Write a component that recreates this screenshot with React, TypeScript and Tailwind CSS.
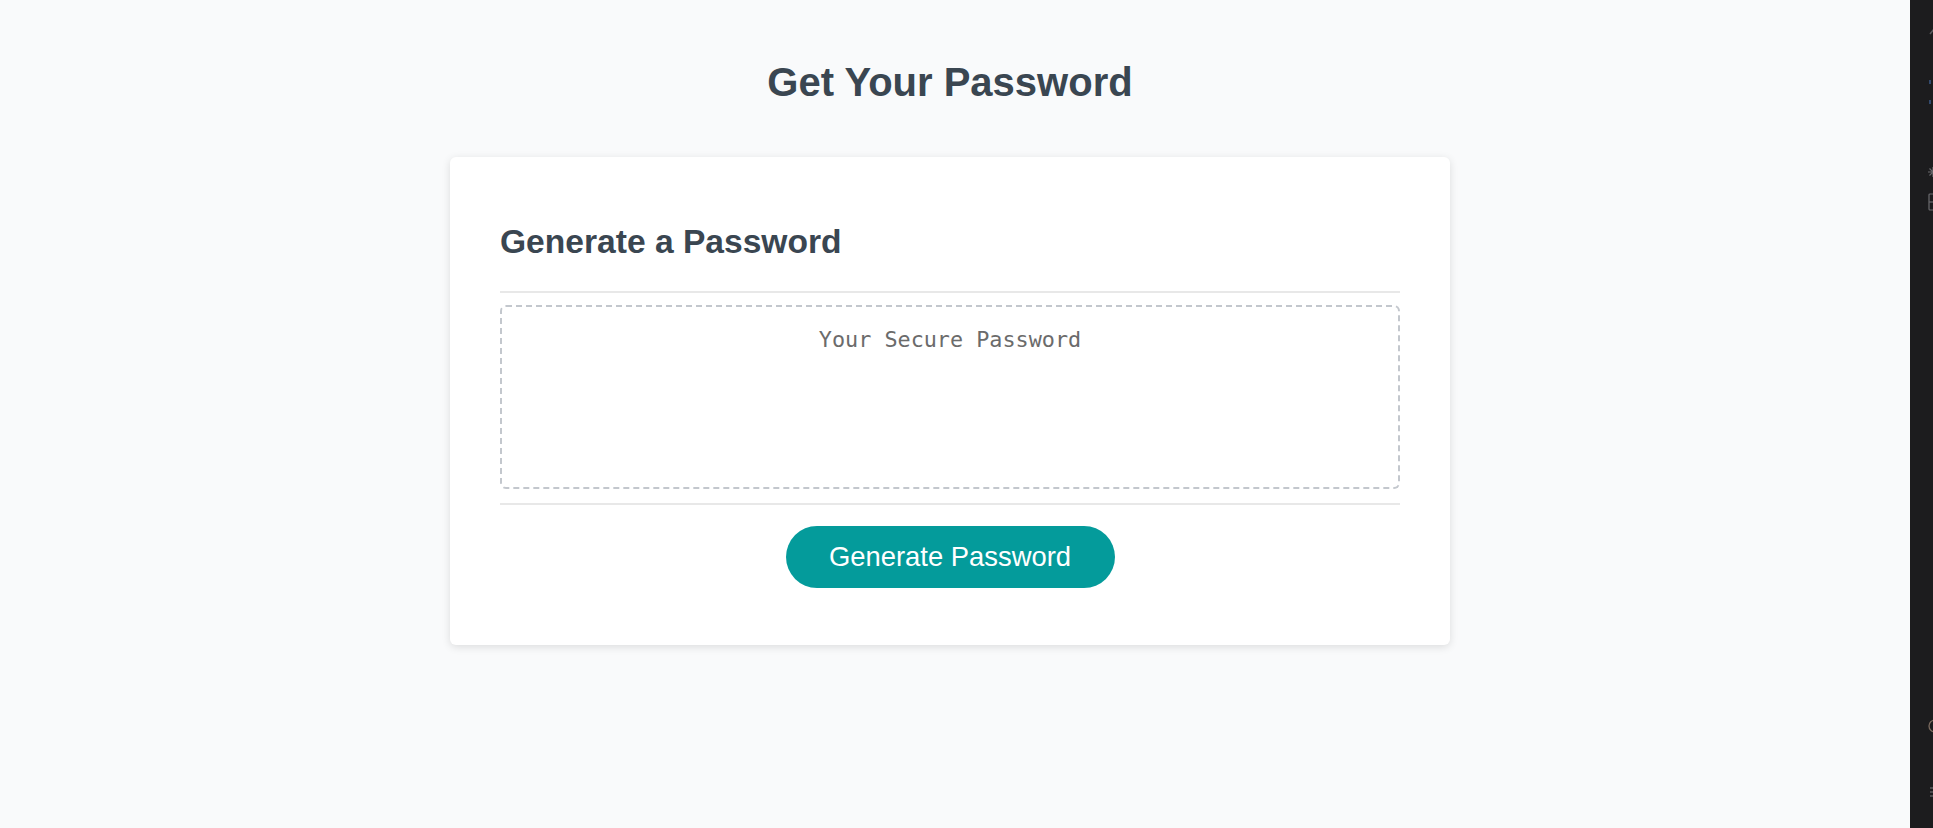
import React from "react";

function SideStrip() {
  return (
    <div className="relative w-[23px] shrink-0 overflow-hidden bg-[#1c1c1e]">
      <svg className="absolute left-[18px] top-[26px]" width="12" height="12" viewBox="0 0 12 12">
        <path d="M2 8 L6 3 L10 8" stroke="#5a5a5e" strokeWidth="1.5" fill="none" />
      </svg>
      <svg className="absolute left-[18px] top-[78px]" width="10" height="30" viewBox="0 0 10 30">
        <path d="M2 2 L2 6" stroke="#3a5a8a" strokeWidth="1.5" />
        <path d="M2 22 L2 26" stroke="#3a5a8a" strokeWidth="1.5" />
      </svg>
      <svg className="absolute left-[17px] top-[166px]" width="12" height="12" viewBox="0 0 12 12">
        <path d="M6 1 L6 11 M1 6 L11 6 M2.5 2.5 L9.5 9.5 M9.5 2.5 L2.5 9.5" stroke="#6a6a6e" strokeWidth="1.2" />
      </svg>
      <svg className="absolute left-[18px] top-[193px]" width="12" height="18" viewBox="0 0 12 18">
        <rect x="1" y="1" width="10" height="16" rx="1" stroke="#6a6a6e" strokeWidth="1.2" fill="none" />
        <path d="M1 9 L11 9" stroke="#6a6a6e" strokeWidth="1.2" />
      </svg>
      <svg className="absolute left-[18px] top-[718px]" width="14" height="16" viewBox="0 0 14 16">
        <circle cx="7" cy="8" r="6" stroke="#7a6a5e" strokeWidth="1.3" fill="none" />
      </svg>
      <svg className="absolute left-[18px] top-[786px]" width="10" height="14" viewBox="0 0 10 14">
        <path d="M2 2 L6 2 M2 6 L6 6 M2 10 L6 10" stroke="#5a5a5e" strokeWidth="1.5" />
      </svg>
    </div>
  );
}

export default function App() {
  return (
    <div
      className="flex h-[828px] w-full bg-[#f9fafb]"
      style={{ fontFamily: '"Liberation Sans", Arial, sans-serif' }}
    >
      <div className="flex flex-1 flex-col items-center pr-[10px] pt-[60px]">
        <h1 className="text-[40px] font-bold leading-[45px] text-[#3a4651]">
          Get Your Password
        </h1>
        <div className="mt-[52px] w-[1000px] rounded-[6px] bg-white px-[50px] pb-[57px] pt-[65px] shadow-[0_2px_8px_rgba(0,0,0,0.12)]">
          <h2 className="text-[33.6px] font-bold leading-[39px] text-[#3a4651]">
            Generate a Password
          </h2>
          <div className="mt-[30px] h-[2px] bg-[#e8e8e8]" />
          <div
            className="mt-[12px] h-[184px] rounded-[6px] border-2 border-dashed border-[#c3c7cd] pt-[20px] text-center text-[21.8px] leading-[25px] text-[#6b6b6b]"
            style={{ fontFamily: '"DejaVu Sans Mono", "Liberation Mono", monospace' }}
          >
            Your Secure Password
          </div>
          <div className="mt-[14px] h-[2px] bg-[#e8e8e8]" />
          <div className="mt-[21px] flex justify-center">
            <button className="h-[62px] w-[329px] rounded-full bg-[#049b9b] text-[27.4px] leading-[32px] text-white">
              Generate Password
            </button>
          </div>
        </div>
      </div>
      <SideStrip />
    </div>
  );
}
